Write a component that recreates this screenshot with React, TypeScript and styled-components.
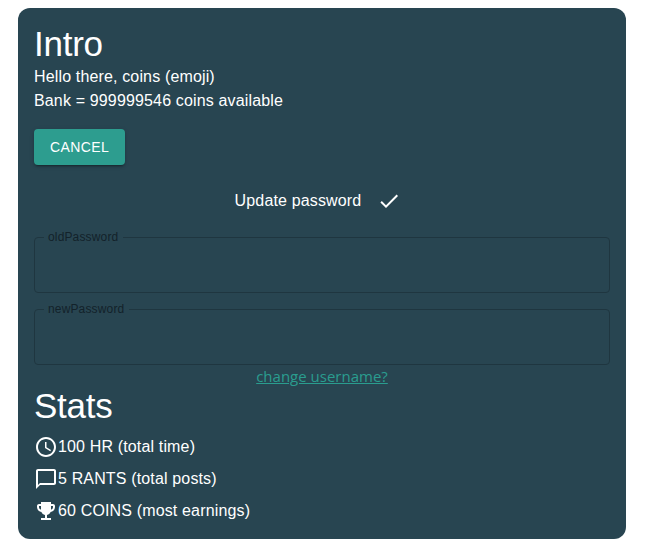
import React from "react";
import styled, { createGlobalStyle } from "styled-components";

const Global = createGlobalStyle`
  *, *::before, *::after { box-sizing: border-box; }
  body { margin: 0; background: #fff; font-family: "Liberation Sans", Arial, sans-serif; }
`;

const Card = styled.main`
  width: 608px;
  height: 531px;
  margin: 8px 0 0 18px;
  padding: 16px 16px 12px;
  border-radius: 12px;
  background: #284551;
  color: #fff;
  display: flex;
  flex-direction: column;

  & > * { flex-shrink: 0; }
`;

const Title = styled.h1`
  margin: 0;
  padding-bottom: 1px;
  font-size: 35px;
  font-weight: 400;
  line-height: 40px;
  letter-spacing: -0.25px;
`;

const Line = styled.p`
  margin: 0;
  font-size: 16px;
  line-height: 24px;
  letter-spacing: 0.15px;
  white-space: nowrap;
`;

const Button = styled.button`
  align-self: flex-start;
  width: 91px;
  height: 36px;
  margin-top: 16px;
  padding: 0;
  border: 0;
  border-radius: 4px;
  background: #2d9d8f;
  color: #fff;
  font: 400 14px/24px "Liberation Sans", Arial, sans-serif;
  letter-spacing: 0.4px;
  box-shadow: 0 3px 1px -2px rgba(0,0,0,.2), 0 2px 2px rgba(0,0,0,.14), 0 1px 5px rgba(0,0,0,.12);
`;

const Update = styled.div`
  display: flex;
  align-items: center;
  justify-content: center;
  gap: 16px;
  height: 24px;
  margin: 24px 8px 19px 0;
`;

const Field = styled.fieldset`
  height: 61px;
  margin: 0 0 11px;
  padding: 0 9px;
  border: 1px solid #1f3640;
  border-radius: 4px;
  &:last-of-type { margin-bottom: 0; }
`;

const Legend = styled.legend`
  height: 11px;
  padding: 0 5px 0 4px;
  font-size: 12px;
  line-height: 11px;
  color: #13222a;
  letter-spacing: 0.15px;
`;

const Link = styled.a`
  align-self: center;
  height: 21px;
  font: 15px/22px "Open Sans", sans-serif;
  color: #2a9d8f;
  text-decoration: underline;
`;

const Stat = styled.div`
  display: flex;
  align-items: center;
  height: 32px;
`;

const Icon = styled.svg`
  width: 24px;
  height: 24px;
  flex: none;
  fill: currentColor;
`;

const Stats = styled.section`
  padding-top: 4px;
`;

const paths = {
  check: "M9 16.17 4.83 12l-1.42 1.41L9 19 21 7l-1.41-1.41z",
  clock: "M11.99 2C6.47 2 2 6.48 2 12s4.47 10 9.99 10C17.52 22 22 17.52 22 12S17.52 2 11.99 2M12 20c-4.42 0-8-3.58-8-8s3.58-8 8-8 8 3.58 8 8-3.58 8-8 8m.5-13H11v6l5.25 3.15.75-1.23-4.5-2.67z",
  chat: "M20 2H4c-1.1 0-2 .9-2 2v18l4-4h14c1.1 0 2-.9 2-2V4c0-1.1-.9-2-2-2m0 14H6l-2 2V4h16z",
  trophy: "M19 5h-2V3H7v2H5c-1.1 0-2 .9-2 2v1c0 2.55 1.92 4.63 4.39 4.94.63 1.5 1.98 2.63 3.61 2.96V19H7v2h10v-2h-4v-3.1c1.63-.33 2.98-1.46 3.61-2.96C19.08 12.63 21 10.55 21 8V7c0-1.1-.9-2-2-2M5 8V7h2v3.82C5.84 10.4 5 9.3 5 8m14 0c0 1.3-.84 2.4-2 2.82V7h2z",
};

const Glyph = ({ name }: { name: keyof typeof paths }) => (
  <Icon viewBox="0 0 24 24" aria-hidden="true"><path d={paths[name]} /></Icon>
);

export default function App() {
  return (
    <>
      <Global />
      <Card>
        <Title>Intro</Title>
        <Line>Hello there, coins (emoji)</Line>
        <Line>Bank = 999999546 coins available</Line>
        <Button>CANCEL</Button>
        <Update><Line>Update password</Line><Glyph name="check" /></Update>
        <Field><Legend>oldPassword</Legend></Field>
        <Field><Legend>newPassword</Legend></Field>
        <Link>change username?</Link>
        <Title as="h2">Stats</Title>
        <Stats>
          <Stat><Glyph name="clock" /><Line>100 HR (total time)</Line></Stat>
          <Stat><Glyph name="chat" /><Line>5 RANTS (total posts)</Line></Stat>
          <Stat><Glyph name="trophy" /><Line>60 COINS (most earnings)</Line></Stat>
        </Stats>
      </Card>
    </>
  );
}
